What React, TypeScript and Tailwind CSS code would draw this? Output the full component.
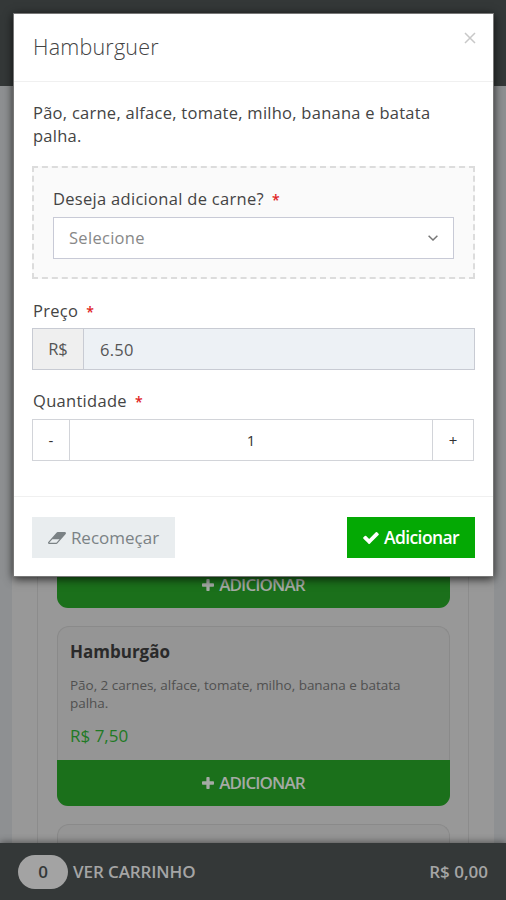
import React from "react";

type IconProps = { className?: string };

function PlusIcon({ className }: IconProps) {
  return (
    <svg viewBox="0 0 1408 1408" fill="currentColor" className={className}>
      <path d="M1408 608v192q0 40-28 68t-68 28h-416v416q0 40-28 68t-68 28h-192q-40 0-68-28t-28-68v-416h-416q-40 0-68-28t-28-68v-192q0-40 28-68t68-28h416v-416q0-40 28-68t68-28h192q40 0 68 28t28 68v416h416q40 0 68 28t28 68z" />
    </svg>
  );
}

function CheckIcon({ className }: IconProps) {
  return (
    <svg viewBox="0 0 1550 1188" fill="currentColor" className={className}>
      <path d="M1550 232q0 40-28 68l-724 724-136 136q-28 28-68 28t-68-28l-136-136-362-362q-28-28-28-68t28-68l136-136q28-28 68-28t68 28l294 295 656-657q28-28 68-28t68 28l136 136q28 28 28 68z" />
    </svg>
  );
}

function EraserIcon({ className }: IconProps) {
  return (
    <svg viewBox="0 0 1920 1280" fill="currentColor" className={className}>
      <path d="M896 1152l336-384h-768l-336 384h768zm1013-1077q15 34 9.5 71.5t-30.5 65.5l-896 1024q-38 44-96 44h-768q-38 0-69.5-20.5t-47.5-54.5q-15-34-9.5-71.5t30.5-65.5l896-1024q38-44 96-44h768q38 0 69.5 20.5t47.5 54.5z" />
    </svg>
  );
}

function AddBar() {
  return (
    <div className="flex h-[46px] shrink-0 items-center justify-center gap-[5px] rounded-b-[11px] bg-[#1b701b] text-[17px] font-semibold tracking-[-0.9px] text-[#a5aaa5]">
      <PlusIcon className="h-3 w-3" />
      <span>ADICIONAR</span>
    </div>
  );
}

function Label({ children }: { children: React.ReactNode }) {
  return (
    <div className="flex h-6 items-center gap-2 text-[16.5px] tracking-[0.3px] text-[#444]">
      <span>{children}</span>
      <span className="text-[14px] font-semibold text-[#e02222]">*</span>
    </div>
  );
}

function Menu() {
  return (
    <div className="flex h-[900px] flex-col bg-[#8e9092]">
      <div className="h-[86px] shrink-0 bg-[#343838]" />
      <div className="mx-3 flex min-h-0 grow flex-col overflow-hidden bg-[#989898] px-[25px]">
        <div className="flex grow flex-col border-x border-[#8c8c8c] pr-[18px] pl-[19px]">
          <div className="h-[476px] shrink-0" />
          <AddBar />
          <div className="mt-[18px] flex h-[180px] shrink-0 flex-col rounded-xl border border-b-0 border-[#8a8a8a] bg-[#959595]">
            <div className="grow px-[12px] pt-[13px]">
              <div className="text-[17px] leading-6 font-bold text-[#2a2a2a]">Hamburgão</div>
              <div className="mt-[12px] text-[13.5px] leading-[18px] tracking-[-0.03px] text-[#505050]">
                Pão, 2 carnes, alface, tomate, milho, banana e batata palha.
              </div>
              <div className="mt-[12px] text-[17px] leading-6 text-[#1f7a24]">R$ 7,50</div>
            </div>
            <div className="-mx-px">
              <AddBar />
            </div>
          </div>
          <div className="mt-[18px] h-10 shrink-0 rounded-t-xl border border-b-0 border-[#8a8a8a] bg-[#959595]" />
        </div>
      </div>
      <div className="flex h-[57px] shrink-0 items-center bg-[#343838] pr-[18px] pl-[18px] text-[17px] font-semibold text-[#a5a5a5] shadow-[0_-1px_7px_rgba(0,0,0,0.45)]">
        <div className="flex h-[34px] w-[50px] items-center justify-center rounded-full bg-[#a3a3a3] text-[#343838]">0</div>
        <div className="ml-[5px] grow tracking-[-0.1px]">VER CARRINHO</div>
        <div>R$ 0,00</div>
      </div>
    </div>
  );
}

function Modal() {
  return (
    <div className="absolute top-[13px] left-[13px] flex h-[564px] w-[481px] flex-col border border-[#777] bg-white shadow-[0_2px_9px_rgba(0,0,0,0.75)]">
      <div className="flex h-[68px] shrink-0 justify-between border-b border-[#f0f0f0] pr-[17px] pl-[18px]">
        <div className="pt-[19px] pl-px text-[21.5px] leading-7 font-light tracking-[0.2px] text-[#444]">Hamburguer</div>
        <svg viewBox="0 0 12 12" className="mt-[18px] h-3 w-3 text-[#c8c8c8]" stroke="currentColor" strokeWidth="1.5">
          <path d="M1 1 11 11M11 1 1 11" />
        </svg>
      </div>
      <div className="grow px-[18px] pt-[19px]">
        <p className="w-[420px] pl-px text-[16.5px] leading-[23px] tracking-[0.26px] text-[#444]">
          Pão, carne, alface, tomate, milho, banana e batata palha.
        </p>
        <div className="mt-[19px] h-[113px] w-[443px] border-2 border-dashed border-[#dcdcdc] bg-[#fafafa] px-[19px] pt-[19px]">
          <Label>Deseja adicional de carne?</Label>
          <div className="mt-[6px] flex h-[42px] w-[401px] items-center justify-between border border-[#c8cad6] bg-white pr-[15px] pl-[15px] text-[16.5px] tracking-[0.3px] text-[#888]">
            <span>Selecione</span>
            <svg viewBox="0 0 10 6" className="h-[6px] w-[10px]" fill="none" stroke="#777" strokeWidth="1.5">
              <path d="M.6.7 5 5 9.4.7" />
            </svg>
          </div>
        </div>
        <div className="mt-[20px] pl-px">
          <Label>Preço</Label>
        </div>
        <div className="mt-[5px] flex h-[42px] w-[443px] border border-[#c8cbd3] text-[16.5px] text-[#555]">
          <div className="flex w-[51px] items-center justify-center border-r border-[#c8cbd3] bg-[#efefef]">R$</div>
          <div className="flex grow items-center bg-[#edf1f5] pt-[2px] pl-[16px] tracking-[0.3px]">6.50</div>
        </div>
        <div className="mt-[19px] pl-px">
          <Label>Quantidade</Label>
        </div>
        <div className="mt-[6px] flex h-[42px] w-[442px] border border-[#d2d4d9] text-[15px] text-[#333]">
          <div className="flex w-[37px] items-center justify-center border-r border-[#d2d4d9]">-</div>
          <div className="flex grow items-center justify-center">1</div>
          <div className="flex w-[41px] items-center justify-center border-l border-[#d2d4d9]">+</div>
        </div>
      </div>
      <div className="flex h-[80px] shrink-0 justify-between border-t border-[#f0f0f0] pt-[20px] pr-[18px] pl-[18px]">
        <div className="flex h-[41px] w-[143px] items-center justify-center gap-[5px] bg-[#e9edef] text-[17px] text-[#7b8285]">
          <EraserIcon className="h-3 w-[18px]" />
          <span>Recomeçar</span>
        </div>
        <div className="flex h-[41px] w-[128px] items-center justify-center gap-[5px] bg-[#04a904] text-[17.5px] font-semibold tracking-[-0.6px] text-white">
          <CheckIcon className="h-3 w-4" />
          <span>Adicionar</span>
        </div>
      </div>
    </div>
  );
}

export default function App() {
  return (
    <div className="relative h-[900px] w-[506px] overflow-hidden font-['Open_Sans','Noto_Sans',sans-serif]">
      <Menu />
      <Modal />
    </div>
  );
}
